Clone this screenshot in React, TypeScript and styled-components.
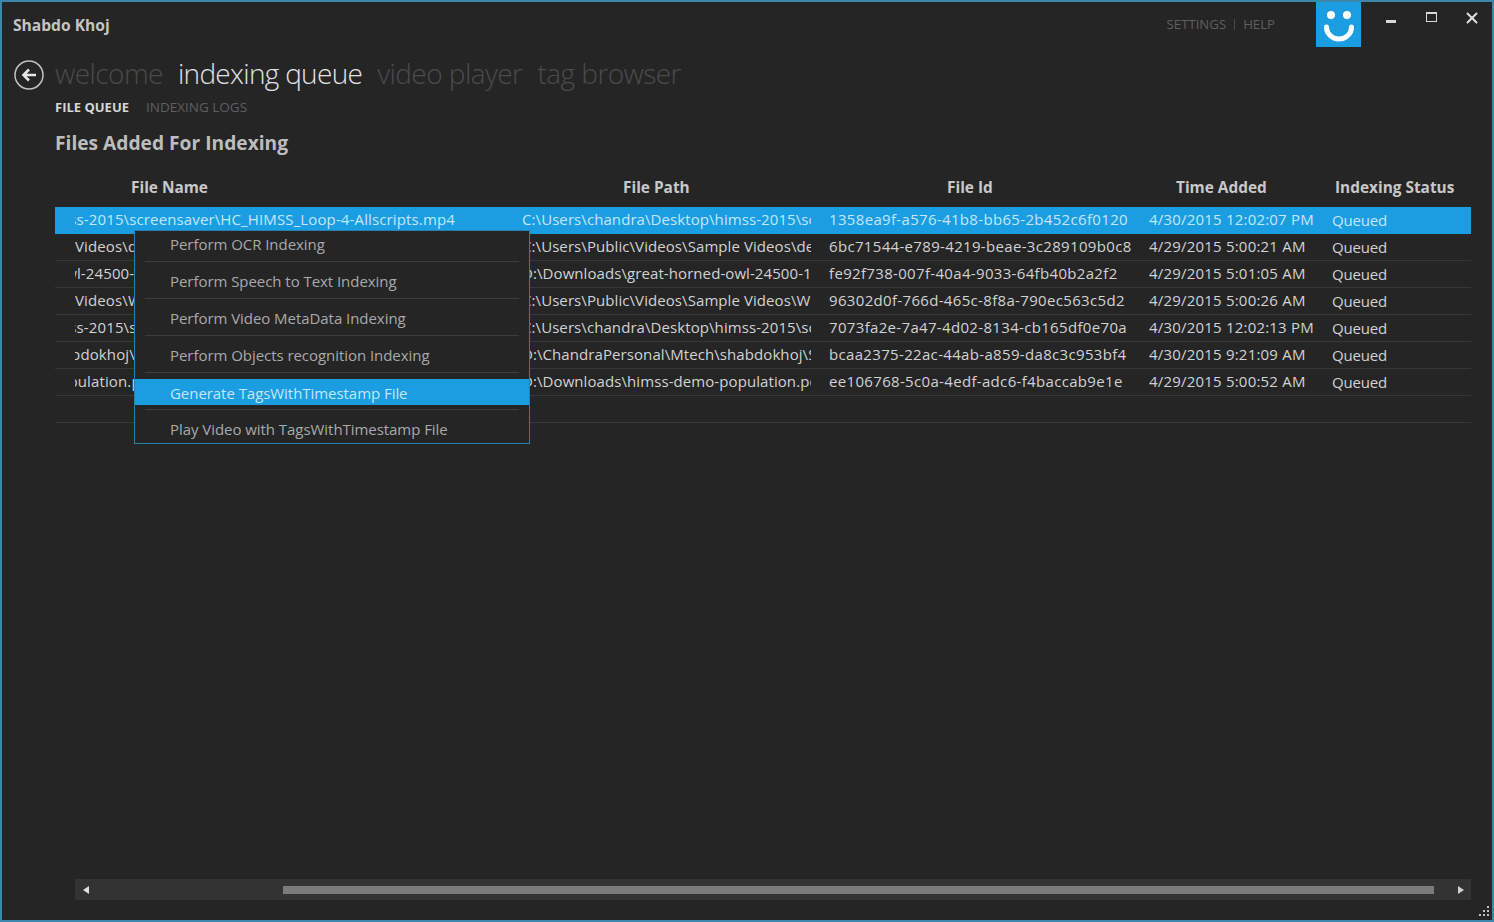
import React from 'react';
import styled, { createGlobalStyle } from 'styled-components';
import { X } from 'lucide-react';

const UI_FONT = '"Open Sans", "Noto Sans", "Liberation Sans", sans-serif';

const GlobalStyle = createGlobalStyle`
  html, body {
    margin: 0;
    padding: 0;
    background: #252526;
  }
  * {
    box-sizing: border-box;
  }
`;

const Window = styled.div`
  position: relative;
  width: 1494px;
  height: 922px;
  display: flex;
  flex-direction: column;
  overflow: hidden;
  background: #252526;
  border: 2px solid #3c88ad;
  font-family: ${UI_FONT};
  color: #d2d2d2;
`;

const TitleBar = styled.div`
  display: flex;
  align-items: flex-start;
  height: 50px;
  padding-left: 11px;
`;

const AppTitle = styled.div`
  margin-top: 13px;
  font-size: 15.6px;
  line-height: 20px;
  font-weight: 700;
  color: #c4c4c4;
`;

const TopLinks = styled.div`
  display: flex;
  align-items: center;
  gap: 8px;
  margin: 13px 0 0 auto;
  font-size: 13.2px;
  line-height: 18px;
  color: #5f5f5f;
`;

const LinkDivider = styled.span`
  width: 1px;
  height: 11px;
  background: #4a4a4a;
`;

const Logo = styled.div`
  width: 45px;
  height: 45px;
  margin-left: 41px;
  background: #1b9de2;
`;

const WindowControls = styled.div`
  display: flex;
  margin-right: 9px;
  margin-left: 18px;
  gap: 19px;
  padding-top: 8px;
`;

const ControlButton = styled.div`
  width: 22px;
  height: 16px;
  display: flex;
  align-items: center;
  justify-content: center;
  color: #e0e0e0;
`;

const MinimizeGlyph = styled.span`
  width: 10px;
  height: 3px;
  margin: 7px 0 0 2px;
  background: #d8d8d8;
`;

const MaximizeGlyph = styled.span`
  width: 11px;
  height: 10px;
  margin-top: -2px;
  border: 1px solid #d8d8d8;
  border-top-width: 2px;
`;

const NavRow = styled.div`
  display: flex;
  align-items: center;
  height: 44px;
  padding-left: 12px;
`;

const BackCircle = styled.div`
  width: 30px;
  height: 30px;
  margin: 2px 11px 0 0;
  display: flex;
  align-items: center;
  justify-content: center;
`;

const NavItem = styled.div<{ $active?: boolean }>`
  margin-right: 15px;
  padding-bottom: 2px;
  font-size: 28px;
  line-height: 40px;
  font-weight: 300;
  letter-spacing: ${({ $active }) => ($active ? -0.7 : -0.55)}px;
  color: ${({ $active }) => ($active ? '#e2e2e2' : '#4b4b4c')};
`;

const Tabs = styled.div`
  display: flex;
  gap: 17px;
  height: 24px;
  padding-left: 53px;
  margin-top: -1px;
`;

const Tab = styled.div<{ $active?: boolean }>`
  font-size: ${({ $active }) => ($active ? 13 : 13.5)}px;
  line-height: 24px;
  font-weight: ${({ $active }) => ($active ? 700 : 400)};
  color: ${({ $active }) => ($active ? '#d6d6d6' : '#5f5f5f')};
`;

const Heading = styled.h2`
  margin: 11px 0 0 53px;
  font-size: 19.2px;
  line-height: 26px;
  font-weight: 700;
  color: #bdbdbd;
`;

const Table = styled.div`
  margin: 13px 21px 0 53px;
`;

const COLUMNS = '467px 307px 320px 183px 1fr';

const HeaderRow = styled.div`
  display: grid;
  grid-template-columns: ${COLUMNS};
  height: 38px;
  padding-bottom: 2px;
  align-items: center;
`;

const HeaderCell = styled.div<{ $inset: number }>`
  padding-left: ${({ $inset }) => $inset}px;
  font-size: 15.4px;
  font-weight: 700;
  color: #c8c8c8;
`;

const Row = styled.div<{ $selected?: boolean }>`
  display: grid;
  grid-template-columns: ${COLUMNS};
  height: 27px;
  align-items: start;
  border-bottom: 1px solid ${({ $selected }) => ($selected ? '#1b9de2' : '#38383a')};
  background: ${({ $selected }) => ($selected ? '#1b9de2' : 'transparent')};
  color: ${({ $selected }) => ($selected ? '#c5e6f8' : '#d2d2d2')};
`;

const Cell = styled.div`
  font-size: 15px;
  line-height: 24px;
  white-space: nowrap;
  overflow: hidden;
`;

const NameCell = styled(Cell)`
  margin-left: 20px;
  letter-spacing: 0.13px;
`;

const NameText = styled.span<{ $shift: number }>`
  display: inline-block;
  margin-left: ${({ $shift }) => -$shift}px;
`;

const PathCell = styled(Cell)`
  margin-right: 18px;
  letter-spacing: 0.08px;
`;

const IdCell = styled(Cell)`
  letter-spacing: 0.33px;
`;

const TimeCell = styled(Cell)`
  letter-spacing: 0.2px;
`;

const StatusCell = styled(Cell)`
  padding-top: 1px;
  letter-spacing: -0.2px;
`;

const ContextMenu = styled.div`
  position: absolute;
  left: 132px;
  top: 228px;
  width: 396px;
  height: 214px;
  background: #252526;
  border: 1px solid #2a7fae;
  overflow: hidden;
  font-size: 15px;
  color: #a9a9a9;
`;

const MenuItem = styled.div<{ $highlighted?: boolean }>`
  height: 26px;
  padding-left: 35px;
  padding-top: ${({ $highlighted }) => ($highlighted ? 1 : 0)}px;
  line-height: 26px;
  letter-spacing: -0.05px;
  background: ${({ $highlighted }) => ($highlighted ? '#1b9de2' : 'transparent')};
  color: ${({ $highlighted }) => ($highlighted ? '#c5e6f8' : '#a9a9a9')};

  &:last-child {
    margin-top: 1px;
  }
`;

const MenuSeparator = styled.div`
  height: 1px;
  margin: 4px 10px 6px;
  background: #3c3c3e;
`;

const ScrollBar = styled.div`
  display: flex;
  align-items: center;
  height: 21px;
  margin: auto 21px 20px 73px;
  background: #333334;
`;

const ScrollArrow = styled.div`
  width: 21px;
  display: flex;
  justify-content: center;
`;

const ScrollTrack = styled.div`
  flex: 1;
  height: 8px;
  padding: 0 16px 0 187px;
`;

const ScrollThumb = styled.div`
  height: 100%;
  background: #7b7b7b;
`;

const ResizeGrip = styled.svg`
  position: absolute;
  right: 1px;
  bottom: 1px;
`;

const files = [
  {
    name: 'himss-2015\\screensaver\\HC_HIMSS_Loop-4-Allscripts.mp4',
    shift: 33,
    path: 'C:\\Users\\chandra\\Desktop\\himss-2015\\screensaver',
    id: '1358ea9f-a576-41b8-bb65-2b452c6f0120',
    time: '4/30/2015 12:02:07 PM',
  },
  {
    name: 'Videos\\demo.mp4',
    shift: 0,
    path: 'C:\\Users\\Public\\Videos\\Sample Videos\\demo.mp4',
    id: '6bc71544-e789-4219-beae-3c289109b0c8',
    time: '4/29/2015 5:00:21 AM',
  },
  {
    name: 'owl-24500-1.mp4',
    shift: 19,
    path: 'D:\\Downloads\\great-horned-owl-24500-1.mp4',
    id: 'fe92f738-007f-40a4-9033-64fb40b2a2f2',
    time: '4/29/2015 5:01:05 AM',
  },
  {
    name: 'Videos\\Wildlife.wmv',
    shift: 0,
    path: 'C:\\Users\\Public\\Videos\\Sample Videos\\Wildlife.wmv',
    id: '96302d0f-766d-465c-8f8a-790ec563c5d2',
    time: '4/29/2015 5:00:26 AM',
  },
  {
    name: 'himss-2015\\screensaver.mp4',
    shift: 33,
    path: 'C:\\Users\\chandra\\Desktop\\himss-2015\\screensaver',
    id: '7073fa2e-7a47-4d02-8134-cb165df0e70a',
    time: '4/30/2015 12:02:13 PM',
  },
  {
    name: 'shabdokhoj\\sample.mp4',
    shift: 29,
    path: 'D:\\ChandraPersonal\\Mtech\\shabdokhoj\\Sample',
    id: 'bcaa2375-22ac-44ab-a859-da8c3c953bf4',
    time: '4/30/2015 9:21:09 AM',
  },
  {
    name: 'population.pdf',
    shift: 25,
    path: 'D:\\Downloads\\himss-demo-population.pdf',
    id: 'ee106768-5c0a-4edf-adc6-f4baccab9e1e',
    time: '4/29/2015 5:00:52 AM',
  },
];

const menuItems = [
  'Perform OCR Indexing',
  'Perform Speech to Text Indexing',
  'Perform Video MetaData Indexing',
  'Perform Objects recognition Indexing',
  'Generate TagsWithTimestamp File',
  'Play Video with TagsWithTimestamp File',
];

export default function App() {
  return (
    <>
      <GlobalStyle />
      <Window>
        <TitleBar>
          <AppTitle>Shabdo Khoj</AppTitle>
          <TopLinks>
            <span>SETTINGS</span>
            <LinkDivider />
            <span>HELP</span>
          </TopLinks>
          <Logo>
            <svg width="45" height="45" viewBox="0 0 45 45">
              <circle cx="15" cy="13" r="4" fill="#fff" />
              <circle cx="31" cy="13" r="4" fill="#fff" />
              <path d="M10.5 25 A12.5 12 0 0 0 35.5 25" fill="none" stroke="#fff" strokeWidth="5" strokeLinecap="round" />
            </svg>
          </Logo>
          <WindowControls>
            <ControlButton>
              <MinimizeGlyph />
            </ControlButton>
            <ControlButton>
              <MaximizeGlyph />
            </ControlButton>
            <ControlButton>
              <X size={18} strokeWidth={2.6} />
            </ControlButton>
          </WindowControls>
        </TitleBar>

        <NavRow>
          <BackCircle>
            <svg width="30" height="30" viewBox="0 0 30 30">
              <circle cx="15" cy="15" r="14" fill="none" stroke="#c2c2c2" strokeWidth="1.5" />
              <path d="M22 15H10M15 9.5L9.5 15L15 20.5" fill="none" stroke="#e6e6e6" strokeWidth="2.6" />
            </svg>
          </BackCircle>
          <NavItem>welcome</NavItem>
          <NavItem $active>indexing queue</NavItem>
          <NavItem>video player</NavItem>
          <NavItem>tag browser</NavItem>
        </NavRow>

        <Tabs>
          <Tab $active>FILE QUEUE</Tab>
          <Tab>INDEXING LOGS</Tab>
        </Tabs>

        <Heading>Files Added For Indexing</Heading>

        <Table>
          <HeaderRow>
            <HeaderCell $inset={76}>File Name</HeaderCell>
            <HeaderCell $inset={101}>File Path</HeaderCell>
            <HeaderCell $inset={118}>File Id</HeaderCell>
            <HeaderCell $inset={27}>Time Added</HeaderCell>
            <HeaderCell $inset={3}>Indexing Status</HeaderCell>
          </HeaderRow>
          {files.map((file, index) => (
            <Row key={file.id} $selected={index === 0}>
              <NameCell>
                <NameText $shift={file.shift}>{file.name}</NameText>
              </NameCell>
              <PathCell>{file.path}</PathCell>
              <IdCell>{file.id}</IdCell>
              <TimeCell>{file.time}</TimeCell>
              <StatusCell>Queued</StatusCell>
            </Row>
          ))}
          <Row />
        </Table>

        <ContextMenu>
          {menuItems.map((item, index) => (
            <React.Fragment key={item}>
              <MenuItem $highlighted={index === 4}>{item}</MenuItem>
              {index < menuItems.length - 1 && <MenuSeparator />}
            </React.Fragment>
          ))}
        </ContextMenu>

        <ScrollBar>
          <ScrollArrow>
            <svg width="6" height="8" viewBox="0 0 6 8">
              <path d="M6 0V8L0 4Z" fill="#e0e0e0" />
            </svg>
          </ScrollArrow>
          <ScrollTrack>
            <ScrollThumb />
          </ScrollTrack>
          <ScrollArrow>
            <svg width="6" height="8" viewBox="0 0 6 8">
              <path d="M0 0V8L6 4Z" fill="#d0d0d0" />
            </svg>
          </ScrollArrow>
        </ScrollBar>

        <ResizeGrip width="14" height="14" viewBox="0 0 14 14">
          <g fill="#c0c0c0">
            <rect x="10" y="1" width="2" height="2" />
            <rect x="6" y="5" width="2" height="2" />
            <rect x="10" y="5" width="2" height="2" />
            <rect x="2" y="9" width="2" height="2" />
            <rect x="6" y="9" width="2" height="2" />
            <rect x="10" y="9" width="2" height="2" />
          </g>
        </ResizeGrip>
      </Window>
    </>
  );
}
